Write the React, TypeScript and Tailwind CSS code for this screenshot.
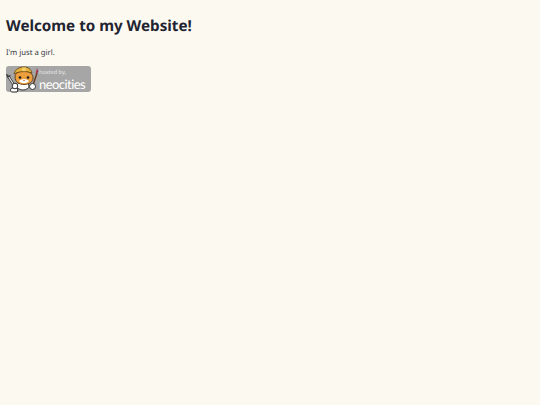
function CatBadge() {
  return (
    <svg viewBox="0 0 34 28" className="absolute left-0 top-0 h-[28px] w-[34px]">
      {/* wrench */}
      <path d="M2 10 L8 19" stroke="#3a3a3a" strokeWidth="2.6" strokeLinecap="round" />
      <path d="M2 10 L8 19" stroke="#e4e4e4" strokeWidth="1.2" strokeLinecap="round" />
      <path d="M0.5 8 L2 11 L4.5 9.5" stroke="#3a3a3a" strokeWidth="1.2" fill="none" />
      {/* body and feet */}
      <ellipse cx="17" cy="20" rx="6" ry="4" fill="#fff" stroke="#333" strokeWidth="1" />
      <path d="M6 22 C4 23 4 25.5 6 26 L11 26 C12 25 12 23 11 22 Z" fill="#fff" stroke="#222" strokeWidth="1" />
      <circle cx="9" cy="20" r="2.8" fill="#fff" stroke="#333" strokeWidth="1" />
      {/* head */}
      <path d="M9 11 C9 7 13 5 18 5 C24 5 27 8 27 12 C27 16 23 18.5 18 18.5 C13 18.5 9 16 9 11 Z" fill="#ee9f3d" stroke="#5b3a1a" strokeWidth="0.9" />
      <path d="M13 15 C15 12.5 21 12.5 23 15 C21 18 15 18 13 15 Z" fill="#fff" />
      <circle cx="14" cy="11.5" r="1.3" fill="#1c1c1c" />
      <circle cx="22" cy="11.5" r="1.3" fill="#1c1c1c" />
      <path d="M17 14 L19 14 L18 15.2 Z" fill="#a8432c" />
      {/* hard hat */}
      <path d="M8 8 C9 3 14 1 18 1 C22 1 25 3 26 7 C21 5 13 5 8 8 Z" fill="#e9b43c" stroke="#6b4a16" strokeWidth="0.9" />
      <path d="M16 1.5 L20 1.5 L19.5 5.2 L16.5 5.2 Z" fill="#f3cf6a" />
      {/* brush */}
      <path d="M31 7 L27 19" stroke="#6b3b22" strokeWidth="1.5" />
      <path d="M31 2 L32.5 6 L29.5 8 Z" fill="#a8324a" />
      <circle cx="26.5" cy="20.5" r="3" fill="#fff" stroke="#333" strokeWidth="1" />
    </svg>
  );
}

export default function App() {
  return (
    <div className="min-h-[405px] bg-[#fcf9f1] p-[6px] font-['Noto_Sans',sans-serif] text-[#1f2430] [text-rendering:geometricPrecision]">
      <h1 className="mt-[8px] text-[15.2px] leading-[24px] font-bold">Welcome to my Website!</h1>
      <p className="mt-[8px] text-[7.7px] leading-[14px] text-[#33363d]">I'm just a girl.</p>
      <div className="relative mt-[6px] flex h-[26px] w-[85px] flex-col items-end rounded-[3px] bg-[#a6a6a6] pt-[3px] pr-[5px] text-white">
        <CatBadge />
        <span className="w-[47px] shrink-0 text-[5.6px] leading-[7px] text-[#e6e6e6]">hosted by,</span>
        <span className="w-[47px] shrink-0 text-[13px] leading-[16px] tracking-[-0.55px] font-['Lato',sans-serif]">neocities</span>
      </div>
    </div>
  );
}
